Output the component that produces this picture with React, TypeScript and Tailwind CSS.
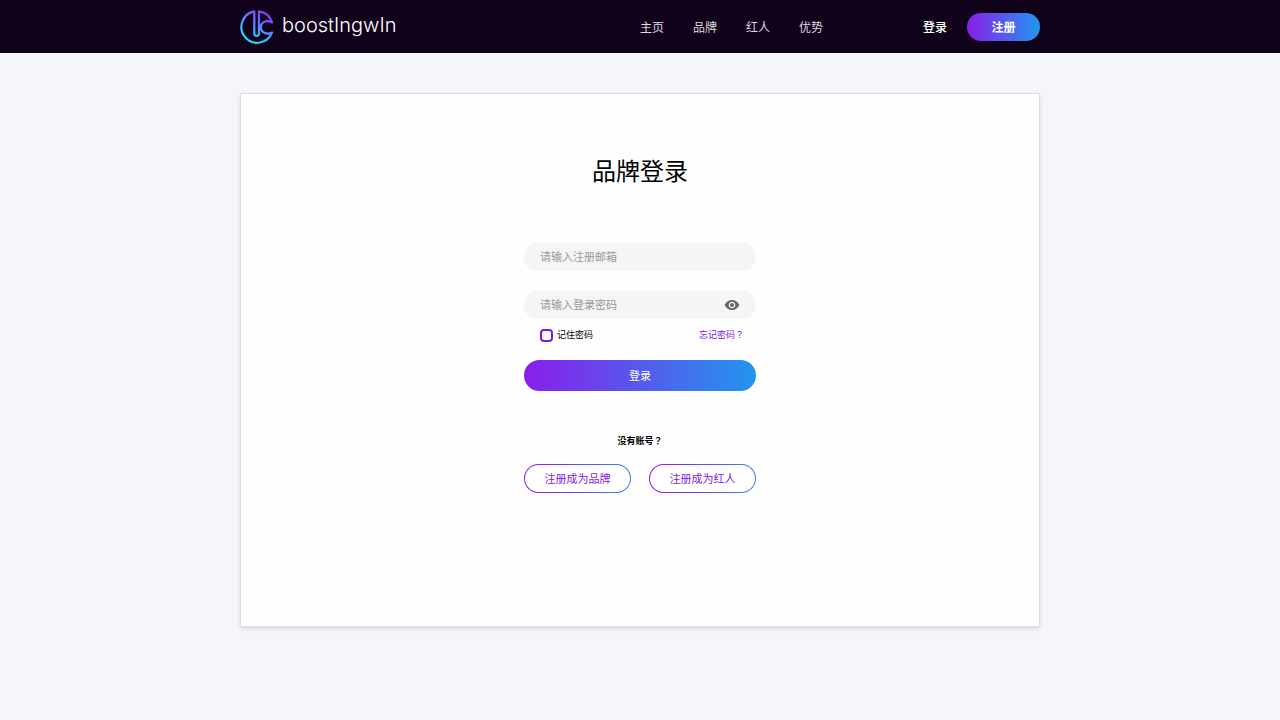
import { useState, type FormEvent } from "react";
import { MdVisibility, MdVisibilityOff } from "react-icons/md";

const NAV_ITEMS = [
  { label: "主页", href: "#home" },
  { label: "品牌", href: "#brand" },
  { label: "红人", href: "#influencer" },
  { label: "优势", href: "#advantage" },
];

const inputClass =
  "block h-7 w-full rounded-full bg-[#f5f5f5] pb-0.5 pl-4 text-[11px] text-[#333] outline-none placeholder:text-[#999] focus:ring-1 focus:ring-[#8a1eea]";

const outlineClass =
  "flex h-[29px] items-center justify-center rounded-full border border-transparent text-[11px] text-[#7f16e8] [background:linear-gradient(#fff,#fff)_padding-box,linear-gradient(90deg,#8a1eea,#3f7df0)_border-box]";

function Logo() {
  return (
    <a href="#home" className="flex items-center gap-2">
      <svg viewBox="0 0 34 34" fill="none" className="size-[34px]" aria-hidden="true">
        <defs>
          <linearGradient id="logo-stroke" x1="8" y1="32" x2="27" y2="3" gradientUnits="userSpaceOnUse">
            <stop offset="0" stopColor="#0cf0ff" />
            <stop offset="0.55" stopColor="#5a86ff" />
            <stop offset="1" stopColor="#9330ff" />
          </linearGradient>
        </defs>
        <path
          d="M14.3 1.4A15.8 15.8 0 1 0 32 22.5C26.5 25.2 20.8 22.2 20.8 17.2C20.8 12.3 26 9.5 32 12.4C30.2 6.6 25.5 2.2 19 1.4V23.5A2.35 2.35 0 0 1 14.3 23.5Z"
          stroke="url(#logo-stroke)"
          strokeWidth="2.2"
          strokeLinejoin="round"
        />
      </svg>
      <span className="pb-1 font-['Inter'] text-xl leading-7 font-light text-white">boostIngwIn</span>
    </a>
  );
}

function Header() {
  return (
    <header className="border-b border-white bg-[#11021c]">
      <div className="mx-auto flex h-[53px] max-w-[800px] items-center">
        <Logo />
        <nav className="mr-[100px] ml-auto flex gap-[29px] text-xs text-[#ddd]">
          {NAV_ITEMS.map((item) => (
            <a key={item.href} href={item.href} className="hover:text-white">
              {item.label}
            </a>
          ))}
        </nav>
        <div className="flex items-center gap-5 text-xs text-white">
          <a href="#login" className="font-medium">
            登录
          </a>
          <a
            href="#register"
            className="flex h-7 w-[73px] items-center justify-center rounded-full bg-linear-to-r/srgb from-[#8a1eea] to-[#2196ee] font-bold"
          >
            注册
          </a>
        </div>
      </div>
    </header>
  );
}

function LoginForm() {
  const [email, setEmail] = useState("");
  const [password, setPassword] = useState("");
  const [visible, setVisible] = useState(false);
  const [remember, setRemember] = useState(false);

  function onSubmit(e: FormEvent) {
    e.preventDefault();
  }

  return (
    <form onSubmit={onSubmit}>
      <input
        type="email"
        aria-label="注册邮箱"
        value={email}
        onChange={(e) => setEmail(e.target.value)}
        placeholder="请输入注册邮箱"
        autoComplete="email"
        className={`${inputClass} pr-4`}
      />

      <div className="relative mt-5">
        <input
          type={visible ? "text" : "password"}
          aria-label="登录密码"
          value={password}
          onChange={(e) => setPassword(e.target.value)}
          placeholder="请输入登录密码"
          autoComplete="current-password"
          className={`${inputClass} pr-10`}
        />
        <button
          type="button"
          aria-label="显示密码"
          onClick={() => setVisible(!visible)}
          className="absolute inset-y-0 right-4 flex items-center text-[#666]"
        >
          {visible ? <MdVisibilityOff className="size-4" /> : <MdVisibility className="size-4" />}
        </button>
      </div>

      <div className="mt-2 flex h-4 items-center justify-between pr-3 pl-4 text-[9px]">
        <label htmlFor="login-remember" className="flex items-center gap-1 text-black">
          <input
            id="login-remember"
            type="checkbox"
            checked={remember}
            onChange={(e) => setRemember(e.target.checked)}
            className="size-[13px] appearance-none rounded-[4px] border-2 border-[#741bee] checked:bg-[#741bee]"
          />
          记住密码
        </label>
        <a href="#forgot" className="font-['Noto_Sans_CJK_TC',sans-serif] text-[#7f16e8]" lang="zh-TW">
          忘记密码？
        </a>
      </div>

      <button
        type="submit"
        className="mt-[17px] h-[31px] w-full rounded-full bg-linear-to-r/srgb from-[#8a1eea] to-[#2196ee] text-[11px] text-white"
      >
        登录
      </button>
    </form>
  );
}

export default function App() {
  return (
    <div
      lang="zh-CN"
      className="min-h-screen bg-[#f4f6fa] font-['Noto_Sans_CJK_SC',sans-serif]"
    >
      <Header />
      <main className="mx-auto mt-[39px] min-h-[534px] max-w-[800px] border border-[#dcdfe6] bg-[#fefefe] pt-[60px] pb-16 shadow-[0_2px_4px_rgba(0,0,0,0.12)]">
        <h1 className="text-center text-2xl leading-8 text-black">品牌登录</h1>
        <div className="mx-auto mt-[57px] w-[232px]">
          <LoginForm />
          <p
            className="mt-[42px] text-center font-['Noto_Sans_CJK_TC',sans-serif] text-[9px] leading-4 font-bold text-black"
            lang="zh-TW"
          >
            没有账号？
          </p>
          <div className="mt-[15px] grid grid-cols-2 gap-[18px]">
            <a href="#register-brand" className={outlineClass}>
              注册成为品牌
            </a>
            <a href="#register-influencer" className={outlineClass}>
              注册成为红人
            </a>
          </div>
        </div>
      </main>
    </div>
  );
}
